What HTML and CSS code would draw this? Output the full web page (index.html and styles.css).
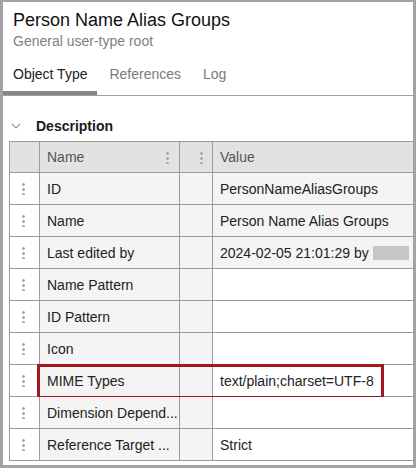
FILE: index.html
```html
<!DOCTYPE html>
<html>
<head>
<meta charset="utf-8">
<link rel="stylesheet" href="styles.css">
</head>
<body>
<div class="frame">
  <div class="head">
    <div class="title">Person Name Alias Groups</div>
    <div class="subtitle">General user-type root</div>
  </div>
  <div class="tabs">
    <div class="tab active">Object Type</div>
    <div class="tab">References</div>
    <div class="tab">Log</div>
  </div>
  <div class="section">
    <div class="section-head">
      <svg class="chev" width="10" height="6" viewBox="0 0 10 6"><path d="M1 1 L5 5 L9 1" fill="none" stroke="#9a9a9a" stroke-width="1.1"/></svg>
      <span>Description</span>
    </div>
    <div class="table">
      <div class="row hdr">
        <div class="c c1"></div>
        <div class="c c2"><span>Name</span><i class="dots"></i></div>
        <div class="c c3"><i class="dots"></i></div>
        <div class="c c4">Value</div>
      </div>
      <div class="row">
        <div class="c c1"><i class="dots sm"></i></div>
        <div class="c c2">ID</div>
        <div class="c c3"></div>
        <div class="c c4 ro">PersonNameAliasGroups</div>
      </div>
      <div class="row">
        <div class="c c1"><i class="dots sm"></i></div>
        <div class="c c2">Name</div>
        <div class="c c3"></div>
        <div class="c c4 ro">Person Name Alias Groups</div>
      </div>
      <div class="row">
        <div class="c c1"><i class="dots sm"></i></div>
        <div class="c c2">Last edited by</div>
        <div class="c c3"></div>
        <div class="c c4 ro">2024-02-05 21:01:29 by<span class="redact"></span></div>
      </div>
      <div class="row">
        <div class="c c1"><i class="dots sm"></i></div>
        <div class="c c2">Name Pattern</div>
        <div class="c c3"></div>
        <div class="c c4"></div>
      </div>
      <div class="row">
        <div class="c c1"><i class="dots sm"></i></div>
        <div class="c c2">ID Pattern</div>
        <div class="c c3"></div>
        <div class="c c4"></div>
      </div>
      <div class="row">
        <div class="c c1"><i class="dots sm"></i></div>
        <div class="c c2">Icon</div>
        <div class="c c3"></div>
        <div class="c c4"></div>
      </div>
      <div class="row mark">
        <div class="c c1"><i class="dots sm"></i></div>
        <div class="c c2">MIME Types</div>
        <div class="c c3"></div>
        <div class="c c4">text/plain;charset=UTF-8</div>
        <div class="highlight"></div>
      </div>
      <div class="row">
        <div class="c c1"><i class="dots sm"></i></div>
        <div class="c c2">Dimension Depend...</div>
        <div class="c c3"></div>
        <div class="c c4"></div>
      </div>
      <div class="row">
        <div class="c c1"><i class="dots sm"></i></div>
        <div class="c c2">Reference Target ...</div>
        <div class="c c3"></div>
        <div class="c c4">Strict</div>
      </div>
    </div>
  </div>
</div>
</body>
</html>
```

FILE: styles.css
```css
html, body {
  margin: 0;
  padding: 0;
  background: #ffffff;
}
.frame {
  box-sizing: border-box;
  width: 416px;
  height: 468px;
  overflow: hidden;
  border-style: solid;
  border-color: #a3a3a3;
  border-width: 2px 3px 3px 3px;
  background: #ffffff;
  font-family: "Liberation Sans", Arial, sans-serif;
  font-size: 14px;
  color: #222222;
}
.head {
  padding: 5px 10px 0 10px;
}
.title {
  font-family: "Liberation Sans", Arial, sans-serif;
  font-size: 18px;
  line-height: 24px;
  padding-top: 1px;
  margin-bottom: -1px;
  color: #111111;
}
.subtitle {
  margin-top: 1px;
  line-height: 18px;
  color: #808080;
}
.tabs {
  display: flex;
  gap: 2px;
  border-bottom: 1px solid #a0a0a0;
}
.tab {
  padding: 15px 10px 8px 10px;
  line-height: 18px;
  color: #7a7a7a;
  border-bottom: 4px solid transparent;
}
.tab.active {
  color: #222222;
  border-bottom-color: #858585;
}
.section {
  padding: 21px 0 0 6px;
}
.section-head {
  display: flex;
  align-items: center;
  height: 18px;
  margin-bottom: 6px;
  font-weight: bold;
  color: #1a1a1a;
}
.chev {
  margin-left: 2px;
  margin-right: 15px;
}
.table {
  width: 440px;
  border-top: 1px solid #9c9c9c;
  border-left: 1px solid #9c9c9c;
}
.row {
  position: relative;
  display: grid;
  grid-template-columns: 30px 140px 33px 1fr;
  height: 32px;
}
.row.hdr {
  height: 31px;
  background: #e2e2e2;
}
.c {
  box-sizing: border-box;
  display: flex;
  align-items: center;
  border-right: 1px solid #9c9c9c;
  border-bottom: 1px solid #9c9c9c;
  white-space: nowrap;
  overflow: hidden;
  position: relative;
}
.row .c1 { background: #ffffff; justify-content: center; }
.row .c2 { background: #f4f4f4; padding-left: 7px; }
.row .c3 { background: #f4f4f4; }
.row .c4 { background: #ffffff; padding-left: 7px; }
.row .c4.ro { background: #f4f4f4; }
.row.hdr .c { background: #e2e2e2; color: #555555; }
.row.hdr .c2 { justify-content: space-between; padding-right: 10px; }
.row.hdr .c3 { justify-content: center; padding-left: 10px; }
.row.hdr .c1 { background: #e2e2e2; }
.dots {
  display: block;
  width: 3px;
  height: 13px;
  background: radial-gradient(circle, #a8a8a8 1.3px, transparent 1.5px) 0 0 / 3px 5px repeat-y;
}
.dots.sm {
  margin-left: -3px;
}
.redact {
  display: inline-block;
  width: 36px;
  height: 14px;
  margin-left: 4px;
  background: #c6c6c6;
}
.highlight {
  position: absolute;
  box-sizing: border-box;
  left: 27px;
  top: -1px;
  width: 347px;
  height: 35px;
  border: 3px solid #a3161d;
  pointer-events: none;
}
```
